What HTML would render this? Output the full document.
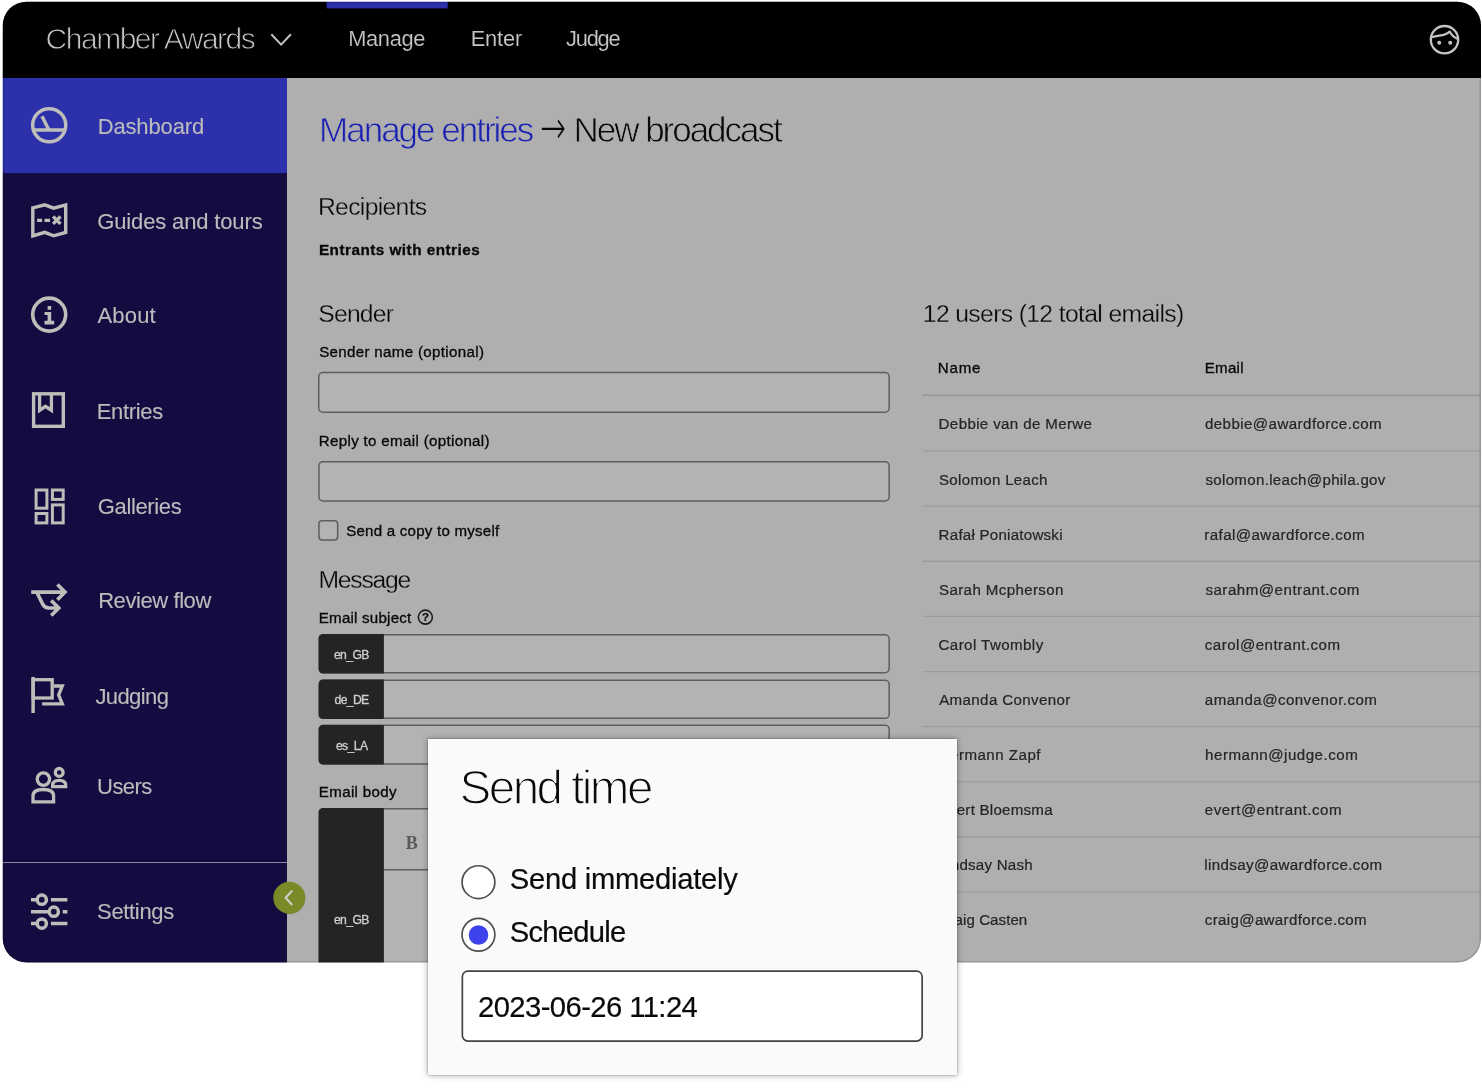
<!DOCTYPE html>
<html lang="en">
<head>
<meta charset="utf-8">
<title>New broadcast – Chamber Awards</title>
<style>
*{box-sizing:border-box;margin:0;padding:0}
html,body{width:1482px;height:1088px;overflow:hidden;background:#fff}
body{position:relative;font-family:"Liberation Sans",sans-serif}
.t{position:absolute;white-space:nowrap;font-family:"Liberation Sans",sans-serif}
.layer{position:absolute;left:0;top:0;width:1482px;height:1088px;will-change:transform}
#frame{position:absolute;left:2px;top:1px;width:1480px;height:962px;background:#afafaf;overflow:hidden}
#topbar{position:absolute;left:0;top:0;width:1480px;height:77px;background:#000}
#sidebar{position:absolute;left:0;top:77px;width:285px;height:885px;background:#120c41}
#sb-active{position:absolute;left:0;top:0;width:285px;height:95px;background:#2c30aa}
#sb-sep{position:absolute;left:0;top:784px;width:285px;height:1px;background:#8b889f}
#popup{position:absolute;left:428px;top:739px;width:529px;height:336px;background:#fafafa;box-shadow:0 0 7px rgba(0,0,0,.32),0 0 1.5px rgba(0,0,0,.45)}
svg{position:absolute;left:0;top:0;overflow:visible}
</style>
</head>
<body>
<div id="frame">
  <div id="topbar"></div>
  <div id="sidebar">
    <div id="sb-active"></div>
    <div id="sb-sep"></div>
  </div>
</div>

<!-- form controls -->
<svg id="form" width="1482" height="1088" viewBox="0 0 1482 1088">
 <g fill="#b3b3b3" stroke="#5e5e5e" stroke-width="1.5">
  <rect x="318.75" y="372.6" width="570.4" height="39.6" rx="4.2"/>
  <rect x="318.95" y="461.65" width="570.2" height="39.3" rx="4.2"/>
  <rect x="318.95" y="520.75" width="18.7" height="19.3" rx="3.2"/>
  <rect x="319.35" y="634.75" width="569.8" height="38.05" rx="4.2"/>
  <rect x="319.35" y="680.25" width="569.8" height="38.10" rx="4.2"/>
  <rect x="319.35" y="725.15" width="569.8" height="38.90" rx="4.2"/>
  <path d="M323.5 808.75H885A4.2 4.2 0 0 1 889.15 813V980H319.35V813A4.2 4.2 0 0 1 323.5 808.75Z"/>
  <path d="M384 869.8H889.9" fill="none"/>
 </g>
 <g fill="#242424">
  <path d="M322.8 634.0H383.9V673.55H322.8A4.2 4.2 0 0 1 318.6 669.35V638.2A4.2 4.2 0 0 1 322.8 634.0Z"/>
  <path d="M322.8 679.5H383.9V719.1H322.8A4.2 4.2 0 0 1 318.6 714.9V683.7A4.2 4.2 0 0 1 322.8 679.5Z"/>
  <path d="M322.8 725.0H383.9V764.6H322.8A4.2 4.2 0 0 1 318.6 760.4V729.2A4.2 4.2 0 0 1 322.8 725.0Z"/>
  <path d="M322.8 808.0H383.9V980H318.6V812.2A4.2 4.2 0 0 1 322.8 808.0Z"/>
 </g>
</svg>

<!-- table rules -->
<svg id="rules" width="1482" height="1088" viewBox="0 0 1482 1088" stroke="#9d9d9d" stroke-width="1.3">
  <path d="M922.3 395.2H1482" stroke-width="2" stroke="#9a9a9a"/>
  <path d="M922.3 450.95H1482"/>
  <path d="M922.3 506.10H1482"/>
  <path d="M922.3 561.25H1482"/>
  <path d="M922.3 616.40H1482"/>
  <path d="M922.3 671.55H1482"/>
  <path d="M922.3 726.70H1482"/>
  <path d="M922.3 781.85H1482"/>
  <path d="M922.3 837.00H1482"/>
  <path d="M922.3 892.15H1482"/>
</svg>

<div class="layer">
<div class="t" style="left:45.62px;top:24px;font-size:30.0px;line-height:30.0px;color:#c6c6c6;letter-spacing:-1.492px;-webkit-text-stroke:0.84px #000000;">Chamber Awards</div>
<div class="t" style="left:348.17px;top:28px;font-size:21.8px;line-height:21.8px;color:#c6c6c6;letter-spacing:-0.294px;-webkit-text-stroke:0.13px #000000;">Manage</div>
<div class="t" style="left:470.67px;top:28px;font-size:21.8px;line-height:21.8px;color:#c6c6c6;letter-spacing:-0.132px;-webkit-text-stroke:0.13px #000000;">Enter</div>
<div class="t" style="left:565.96px;top:28px;font-size:21.8px;line-height:21.8px;color:#c6c6c6;letter-spacing:-1.173px;-webkit-text-stroke:0.13px #000000;">Judge</div>
<div class="t" style="left:97.67px;top:116px;font-size:22.0px;line-height:22.0px;color:#bcbcbc;letter-spacing:-0.141px;-webkit-text-stroke:0.12px #bcbcbc;">Dashboard</div>
<div class="t" style="left:97.28px;top:211px;font-size:22.0px;line-height:22.0px;color:#bcbcbc;letter-spacing:-0.145px;-webkit-text-stroke:0.12px #bcbcbc;">Guides and tours</div>
<div class="t" style="left:97.53px;top:305px;font-size:22.0px;line-height:22.0px;color:#bcbcbc;letter-spacing:0.168px;-webkit-text-stroke:0.12px #bcbcbc;">About</div>
<div class="t" style="left:96.67px;top:401px;font-size:22.0px;line-height:22.0px;color:#bcbcbc;letter-spacing:-0.304px;-webkit-text-stroke:0.12px #bcbcbc;">Entries</div>
<div class="t" style="left:97.78px;top:496px;font-size:22.0px;line-height:22.0px;color:#bcbcbc;letter-spacing:-0.366px;-webkit-text-stroke:0.12px #bcbcbc;">Galleries</div>
<div class="t" style="left:98.17px;top:590px;font-size:22.0px;line-height:22.0px;color:#bcbcbc;letter-spacing:-0.422px;-webkit-text-stroke:0.12px #bcbcbc;">Review flow</div>
<div class="t" style="left:95.40px;top:686px;font-size:22.0px;line-height:22.0px;color:#bcbcbc;letter-spacing:-0.593px;-webkit-text-stroke:0.12px #bcbcbc;">Judging</div>
<div class="t" style="left:97.07px;top:776px;font-size:22.0px;line-height:22.0px;color:#bcbcbc;letter-spacing:-0.561px;-webkit-text-stroke:0.12px #bcbcbc;">Users</div>
<div class="t" style="left:97.06px;top:901px;font-size:22.0px;line-height:22.0px;color:#bcbcbc;letter-spacing:-0.336px;-webkit-text-stroke:0.12px #bcbcbc;">Settings</div>
<div class="t" style="left:319.05px;top:112px;font-size:35.0px;line-height:35.0px;color:#1a20b2;letter-spacing:-1.998px;-webkit-text-stroke:0.77px #afafaf;">Manage entries</div>
<div class="t" style="left:539.91px;top:105px;font-size:45.5px;line-height:45.5px;color:#080808;font-weight:200;font-family:'DejaVu Sans', 'Liberation Sans', sans-serif;transform:scaleX(0.6822);transform-origin:0 50%;">→</div>
<div class="t" style="left:573.55px;top:112px;font-size:35.0px;line-height:35.0px;color:#080808;letter-spacing:-2.029px;-webkit-text-stroke:0.77px #afafaf;">New broadcast</div>
<div class="t" style="left:317.93px;top:195px;font-size:24.7px;line-height:24.7px;color:#080808;letter-spacing:-0.666px;-webkit-text-stroke:0.30px #afafaf;">Recipients</div>
<div class="t" style="left:318.95px;top:242px;font-size:15.3px;line-height:15.3px;color:#080808;letter-spacing:0.473px;font-weight:700;-webkit-text-stroke:0.3px #080808;">Entrants with entries</div>
<div class="t" style="left:318.28px;top:302px;font-size:24.7px;line-height:24.7px;color:#080808;letter-spacing:-0.786px;-webkit-text-stroke:0.30px #afafaf;">Sender</div>
<div class="t" style="left:319.13px;top:344px;font-size:15.1px;line-height:15.1px;color:#080808;letter-spacing:0.336px;-webkit-text-stroke:0.32px #080808;">Sender name (optional)</div>
<div class="t" style="left:318.82px;top:433px;font-size:15.1px;line-height:15.1px;color:#080808;letter-spacing:0.333px;-webkit-text-stroke:0.32px #080808;">Reply to email (optional)</div>
<div class="t" style="left:346.13px;top:523px;font-size:15.1px;line-height:15.1px;color:#080808;letter-spacing:0.229px;-webkit-text-stroke:0.32px #080808;">Send a copy to myself</div>
<div class="t" style="left:318.43px;top:568px;font-size:24.7px;line-height:24.7px;color:#080808;letter-spacing:-1.223px;-webkit-text-stroke:0.30px #afafaf;">Message</div>
<div class="t" style="left:318.82px;top:610px;font-size:15.1px;line-height:15.1px;color:#080808;letter-spacing:0.222px;-webkit-text-stroke:0.32px #080808;">Email subject</div>
<div class="t" style="left:333.95px;top:649px;font-size:12.2px;line-height:12.2px;color:#d0d0d0;letter-spacing:-0.607px;-webkit-text-stroke:0.3px #d0d0d0;">en_GB</div>
<div class="t" style="left:334.53px;top:694px;font-size:12.2px;line-height:12.2px;color:#d0d0d0;letter-spacing:-0.633px;-webkit-text-stroke:0.3px #d0d0d0;">de_DE</div>
<div class="t" style="left:335.95px;top:740px;font-size:12.2px;line-height:12.2px;color:#d0d0d0;letter-spacing:-0.618px;-webkit-text-stroke:0.3px #d0d0d0;">es_LA</div>
<div class="t" style="left:318.82px;top:784px;font-size:15.1px;line-height:15.1px;color:#080808;letter-spacing:0.344px;-webkit-text-stroke:0.32px #080808;">Email body</div>
<div class="t" style="left:333.95px;top:914px;font-size:12.2px;line-height:12.2px;color:#d0d0d0;letter-spacing:-0.607px;-webkit-text-stroke:0.3px #d0d0d0;">en_GB</div>
<div class="t" style="left:405.68px;top:834px;font-size:18.0px;line-height:18.0px;color:#5a5a5a;font-weight:700;font-family:'Liberation Serif', serif;">B</div>
<div class="t" style="left:421.97px;top:612px;font-size:11.5px;line-height:11.5px;color:#080808;font-weight:700;-webkit-text-stroke:0.2px #080808;">?</div>
<div class="t" style="left:922.84px;top:302px;font-size:24.7px;line-height:24.7px;color:#080808;letter-spacing:-0.633px;-webkit-text-stroke:0.30px #afafaf;">12 users (12 total emails)</div>
<div class="t" style="left:937.85px;top:360px;font-size:15.1px;line-height:15.1px;color:#080808;letter-spacing:0.754px;-webkit-text-stroke:0.32px #080808;">Name</div>
<div class="t" style="left:1204.82px;top:360px;font-size:15.1px;line-height:15.1px;color:#080808;letter-spacing:0.243px;-webkit-text-stroke:0.32px #080808;">Email</div>
<div class="t" style="left:938.62px;top:416px;font-size:15.1px;line-height:15.1px;color:#252525;letter-spacing:0.365px;-webkit-text-stroke:0.22px #252525;">Debbie van de Merwe</div>
<div class="t" style="left:1204.90px;top:416px;font-size:15.1px;line-height:15.1px;color:#252525;letter-spacing:0.437px;-webkit-text-stroke:0.22px #252525;">debbie@awardforce.com</div>
<div class="t" style="left:938.99px;top:472px;font-size:15.1px;line-height:15.1px;color:#252525;letter-spacing:0.302px;-webkit-text-stroke:0.22px #252525;">Solomon Leach</div>
<div class="t" style="left:1205.41px;top:472px;font-size:15.1px;line-height:15.1px;color:#252525;letter-spacing:0.312px;-webkit-text-stroke:0.22px #252525;">solomon.leach@phila.gov</div>
<div class="t" style="left:938.62px;top:527px;font-size:15.1px;line-height:15.1px;color:#252525;letter-spacing:0.244px;-webkit-text-stroke:0.22px #252525;">Rafał Poniatowski</div>
<div class="t" style="left:1204.26px;top:527px;font-size:15.1px;line-height:15.1px;color:#252525;letter-spacing:0.433px;-webkit-text-stroke:0.22px #252525;">rafal@awardforce.com</div>
<div class="t" style="left:938.99px;top:582px;font-size:15.1px;line-height:15.1px;color:#252525;letter-spacing:0.382px;-webkit-text-stroke:0.22px #252525;">Sarah Mcpherson</div>
<div class="t" style="left:1205.41px;top:582px;font-size:15.1px;line-height:15.1px;color:#252525;letter-spacing:0.508px;-webkit-text-stroke:0.22px #252525;">sarahm@entrant.com</div>
<div class="t" style="left:938.52px;top:637px;font-size:15.1px;line-height:15.1px;color:#252525;letter-spacing:0.429px;-webkit-text-stroke:0.22px #252525;">Carol Twombly</div>
<div class="t" style="left:1204.83px;top:637px;font-size:15.1px;line-height:15.1px;color:#252525;letter-spacing:0.468px;-webkit-text-stroke:0.22px #252525;">carol@entrant.com</div>
<div class="t" style="left:939.14px;top:692px;font-size:15.1px;line-height:15.1px;color:#252525;letter-spacing:0.386px;-webkit-text-stroke:0.22px #252525;">Amanda Convenor</div>
<div class="t" style="left:1204.83px;top:692px;font-size:15.1px;line-height:15.1px;color:#252525;letter-spacing:0.459px;-webkit-text-stroke:0.22px #252525;">amanda@convenor.com</div>
<div class="t" style="left:938.62px;top:747px;font-size:15.1px;line-height:15.1px;color:#252525;letter-spacing:0.489px;-webkit-text-stroke:0.22px #252525;">Hermann Zapf</div>
<div class="t" style="left:1205.12px;top:747px;font-size:15.1px;line-height:15.1px;color:#252525;letter-spacing:0.505px;-webkit-text-stroke:0.22px #252525;">hermann@judge.com</div>
<div class="t" style="left:938.62px;top:802px;font-size:15.1px;line-height:15.1px;color:#252525;letter-spacing:0.249px;-webkit-text-stroke:0.22px #252525;">Evert Bloemsma</div>
<div class="t" style="left:1204.83px;top:802px;font-size:15.1px;line-height:15.1px;color:#252525;letter-spacing:0.509px;-webkit-text-stroke:0.22px #252525;">evert@entrant.com</div>
<div class="t" style="left:938.62px;top:857px;font-size:15.1px;line-height:15.1px;color:#252525;letter-spacing:0.235px;-webkit-text-stroke:0.22px #252525;">Lindsay Nash</div>
<div class="t" style="left:1204.27px;top:857px;font-size:15.1px;line-height:15.1px;color:#252525;letter-spacing:0.391px;-webkit-text-stroke:0.22px #252525;">lindsay@awardforce.com</div>
<div class="t" style="left:938.52px;top:912px;font-size:15.1px;line-height:15.1px;color:#252525;letter-spacing:0.059px;-webkit-text-stroke:0.22px #252525;">Craig Casten</div>
<div class="t" style="left:1204.83px;top:912px;font-size:15.1px;line-height:15.1px;color:#252525;letter-spacing:0.337px;-webkit-text-stroke:0.22px #252525;">craig@awardforce.com</div>
</div>

<!-- icons -->
<svg id="icons" width="1482" height="1088" viewBox="0 0 1482 1088" fill="none" stroke="#bdbdb9" stroke-width="3.4">
<!-- tab indicator -->
<rect x="326.7" y="0" width="121" height="8.4" fill="#2c30aa" stroke="none"/>
<!-- dashboard -->
<circle cx="49.2" cy="125.3" r="16.55" stroke-width="3.5"/>
<path d="M33.5 130H65M42 116.3L48.4 129" stroke-width="3.5"/>
<!-- guides and tours -->
<path d="M32.8 207.9L44.8 204.8L53.6 208.2L65.7 204.9V232.4L53.6 235.8L44.8 232.3L32.8 235.9Z" stroke-width="3.4"/>
<path d="M37.1 220.3H42.1M44.5 220.3H50" stroke-width="3.3"/>
<path d="M53.1 216.5L60.5 223.9M60.5 216.5L53.1 223.9" stroke-width="3.3"/>
<!-- about -->
<circle cx="49.2" cy="314.6" r="16.5" stroke-width="3.6"/>
<path d="M47.6 306H51.2V309.8H47.6Z M44.5 312H51.2V320.8H54.2V324.4H44.5V320.8H47.6V315H44.5Z" fill="#bdbdb9" stroke="none"/>
<!-- entries -->
<rect x="33.6" y="393.8" width="29.7" height="32.5" stroke-width="3.4"/>
<path d="M39.6 393.8V410.4L45.5 406.3L51.4 410.4V393.8" stroke-width="3.3"/>
<!-- galleries -->
<rect x="36.1" y="490" width="10.8" height="18.2" stroke-width="3"/>
<rect x="52.4" y="490" width="10.8" height="9.4" stroke-width="3"/>
<rect x="36.1" y="513.5" width="10.8" height="9.4" stroke-width="3"/>
<rect x="52.4" y="504.9" width="10.8" height="18" stroke-width="3"/>
<!-- review flow -->
<path d="M31.2 592.1H64.5M57.4 584.5L65 592.1L57.4 599.7" stroke-width="3.6"/>
<path d="M37 592.5L42.3 603.4Q44.5 608 49 608H58.3M51.2 600.4L58.8 608L51.2 615.6" stroke-width="3.6"/>
<!-- judging -->
<path d="M33.1 676.9V713" stroke-width="3.5"/>
<rect x="33.1" y="679.7" width="19.1" height="18.3" stroke-width="3.3"/>
<path d="M53.8 686H62.3L58.6 695L62.3 703.8H42.1" stroke-width="3.3"/>
<!-- users -->
<circle cx="43.4" cy="779.1" r="6.2" stroke-width="3.3"/>
<path d="M33 801.8V796Q33 789.5 43.3 789.5Q53.6 789.5 53.6 796V801.8Z" stroke-width="3.3"/>
<circle cx="59.2" cy="772.4" r="3.9" stroke-width="3.3"/>
<path d="M52.6 786.7V785.5Q52.6 780.4 59.2 780.4Q65.7 780.4 65.7 785.5V786.7Z" stroke-width="3.3"/>
<!-- settings -->
<g stroke-width="3.5">
<path d="M31 899.7H37.3M50.9 899.7H67.4M31 911.7H49.2M62.7 911.7H67.4M31 923.6H37.3M50.9 923.6H67.4"/>
<circle cx="41.8" cy="899.7" r="4.6"/><circle cx="53.8" cy="911.7" r="4.6"/><circle cx="41.8" cy="923.6" r="4.6"/>
</g>
<!-- topbar chevron -->
<path d="M271.3 34.3L281.1 44.6L290.9 34.3" stroke="#c4c4c4" stroke-width="2"/>
<!-- user avatar -->
<g stroke="#c4c4c4" stroke-width="2.3">
<circle cx="1444.5" cy="39.7" r="13.7"/>
<path d="M1431.8 37.2C1439 34.8 1444.5 36.6 1449.7 31.6C1451.6 35.4 1454 37.4 1457.2 38.8" stroke-width="2.2" stroke-linejoin="round"/>
<circle cx="1439.2" cy="42.7" r="2" fill="#c4c4c4" stroke="none"/><circle cx="1450.2" cy="42.7" r="2" fill="#c4c4c4" stroke="none"/>
</g>
<!-- help icon -->
<circle cx="425.35" cy="617.15" r="7" stroke="#1c1c1c" stroke-width="1.6"/>
<!-- collapse button -->
<circle cx="289.3" cy="898.3" r="16" fill="rgba(0,0,0,.25)" stroke="none"/>
<circle cx="289.3" cy="897.8" r="16" fill="#7a8a27" stroke="none"/>
<path d="M292.3 890.6L285.6 897.8L292.3 905" stroke="#cfcfcf" stroke-width="2"/>

</svg>

<!-- clip everything outside the rounded frame -->
<svg id="mask" width="1482" height="1088" viewBox="0 0 1482 1088">
  <path fill="#fff" fill-rule="evenodd" d="M0 0H1482V1088H0Z M26.55 1.65H1457.2A23.8 23.8 0 0 1 1481.0 25.45V938.7A23.8 23.8 0 0 1 1457.2 962.5H26.55A23.8 23.8 0 0 1 2.75 938.7V25.45A23.8 23.8 0 0 1 26.55 1.65Z"/>
  <path fill="none" stroke="rgba(0,0,0,.14)" stroke-width="1.5" d="M26.55 2.4H1457.2A23.05 23.05 0 0 1 1480.25 25.45V938.7A23.05 23.05 0 0 1 1457.2 961.75H26.55A23.05 23.05 0 0 1 3.5 938.7V25.45A23.05 23.05 0 0 1 26.55 2.4Z"/>
</svg>

<div id="popup"></div>
<svg id="popsvg" width="1482" height="1088" viewBox="0 0 1482 1088" fill="#fff" stroke="#4e4e4e" stroke-width="1.7">
  <circle cx="478.45" cy="882.15" r="16.4"/>
  <circle cx="478.45" cy="934.8" r="16.4"/>
  <circle cx="478.5" cy="935" r="9.8" fill="#3e42ec" stroke="none"/>
  <rect x="462.35" y="971.15" width="459.8" height="69.9" rx="5.5" stroke="#444" stroke-width="1.7"/>
</svg>
<div class="layer">
<div class="t" style="left:459.54px;top:764px;font-size:47.6px;line-height:47.6px;color:#0a0a0a;letter-spacing:-2.548px;-webkit-text-stroke:1.43px #fafafa;">Send time</div>
<div class="t" style="left:509.73px;top:865px;font-size:29.2px;line-height:29.2px;color:#0a0a0a;letter-spacing:-0.253px;-webkit-text-stroke:0.2px #0a0a0a;">Send immediately</div>
<div class="t" style="left:509.73px;top:918px;font-size:29.2px;line-height:29.2px;color:#0a0a0a;letter-spacing:-0.734px;-webkit-text-stroke:0.2px #0a0a0a;">Schedule</div>
<div class="t" style="left:477.98px;top:993px;font-size:29.2px;line-height:29.2px;color:#0a0a0a;letter-spacing:-0.563px;-webkit-text-stroke:0.2px #0a0a0a;">2023-06-26 11:24</div>
</div>
</body>
</html>
